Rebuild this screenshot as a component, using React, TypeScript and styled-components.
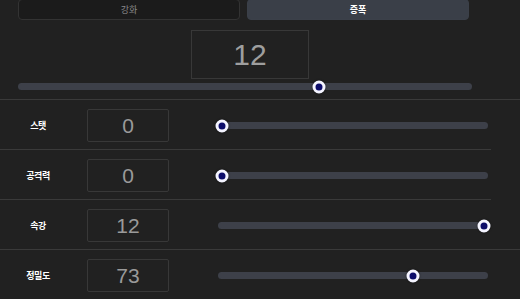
import React from 'react';
import styled, { createGlobalStyle } from 'styled-components';

const GlobalStyle = createGlobalStyle`
  body {
    margin: 0;
    background: #212121;
    font-family: 'Noto Sans CJK KR', 'Noto Sans', sans-serif;
  }
`;

const Page = styled.div`
  width: 520px;
  height: 299px;
  overflow: hidden;
  background: #212121;
`;

const Top = styled.div`
  display: flex;
  flex-direction: column;
  align-items: center;
  width: 454px;
  margin-left: 18px;
`;

const Tabs = styled.div`
  display: grid;
  grid-template-columns: 222px 222px;
  column-gap: 7px;
  width: 100%;
`;

const Tab = styled.button<{ $active?: boolean }>`
  height: 21px;
  margin-top: -1px;
  border: 1px solid ${({ $active }) => ($active ? '#3b4049' : '#333333')};
  border-radius: 4px;
  background: ${({ $active }) => ($active ? '#3a3f48' : '#1b1b1b')};
  color: ${({ $active }) => ($active ? '#ffffff' : '#8a8a8a')};
  font-family: 'Noto Sans CJK KR', sans-serif;
  font-size: 9px;
  font-weight: ${({ $active }) => ($active ? 700 : 400)};
  padding: 0;
`;

const BigValue = styled.div`
  width: 116px;
  height: 47px;
  margin-top: 10px;
  margin-left: 10px;
  border: 1px solid #383838;
  display: flex;
  align-items: center;
  justify-content: center;
  color: #9e9e9e;
  font-family: 'Liberation Sans', Arial, sans-serif;
  font-size: 30px;
`;

const Track = styled.div<{ $width: number }>`
  position: relative;
  width: ${({ $width }) => $width}px;
  height: 7px;
  border-radius: 4px;
  background: #3d4049;
`;

const Thumb = styled.span`
  position: absolute;
  top: 50%;
  width: 7px;
  height: 7px;
  border-radius: 50%;
  background: #0c0c6a;
  border: 3.5px solid #f4f4ff;
  transform: translate(-50%, -50%);
  box-shadow: 0 0 2px rgba(0, 0, 0, 0.6);
`;

const TopSlider = styled.div`
  margin-top: 4px;
  margin-bottom: 9px;
`;

const Divider = styled.div<{ $short?: boolean }>`
  height: 1px;
  width: ${({ $short }) => ($short ? '491px' : '100%')};
  background: #3a3a3a;
`;

const Row = styled.div`
  display: grid;
  grid-template-columns: 76px 82px 1fr;
  column-gap: 11px;
  align-items: center;
  height: 49px;
  padding-top: 2px;
  box-sizing: border-box;
`;

const Label = styled.div`
  text-align: center;
  color: #ffffff;
  font-size: 9px;
  font-weight: 700;
  letter-spacing: -0.5px;
`;

const ValueBox = styled.div`
  height: 31px;
  border: 1px solid #383838;
  border-radius: 2px;
  display: flex;
  align-items: center;
  justify-content: center;
  color: #9a9a9a;
  font-family: 'Liberation Sans', Arial, sans-serif;
  font-size: 21px;
`;

const RowSlider = styled.div`
  margin-left: 38px;
`;

type SliderProps = { pos: number; width: number; inset: number };

function Slider({ pos, width, inset }: SliderProps) {
  const left = inset + (width - inset * 2) * pos;
  return (
    <Track $width={width}>
      <Thumb style={{ left }} />
    </Track>
  );
}

const stats = [
  { label: '스탯', value: 0, pos: 0, short: true },
  { label: '공격력', value: 0, pos: 0, short: true },
  { label: '속강', value: 12, pos: 1, short: false },
  { label: '정밀도', value: 73, pos: 0.73, short: false },
];

export default function App() {
  return (
    <Page>
      <GlobalStyle />
      <Top>
        <Tabs>
          <Tab>강화</Tab>
          <Tab $active>증폭</Tab>
        </Tabs>
        <BigValue>12</BigValue>
        <TopSlider>
          <Slider width={454} inset={6} pos={0.668} />
        </TopSlider>
      </Top>
      <Divider />
      {stats.map(s => (
        <React.Fragment key={s.label}>
          <Row>
            <Label>{s.label}</Label>
            <ValueBox>{s.value}</ValueBox>
            <RowSlider>
              <Slider width={270} inset={4} pos={s.pos} />
            </RowSlider>
          </Row>
          <Divider $short={s.short} />
        </React.Fragment>
      ))}
    </Page>
  );
}
